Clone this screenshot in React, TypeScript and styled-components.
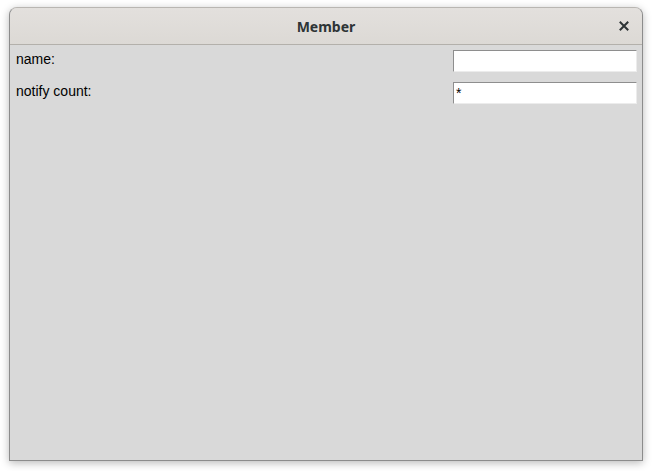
import React from "react";
import styled, { createGlobalStyle } from "styled-components";

const Global = createGlobalStyle`
  html, body { margin: 0; padding: 0; background: #ffffff; }
  body { font-family: "Liberation Sans", Arial, sans-serif; }
`;

const Page = styled.div`
  width: 652px;
  height: 471px;
  padding: 7px 0 0 9px;
  box-sizing: border-box;
`;

const Window = styled.div`
  width: 634px;
  height: 454px;
  box-sizing: border-box;
  border: 1px solid #8c8c8c;
  border-top-color: #b9b6b2;
  border-radius: 8px 8px 0 0;
  background: #d9d9d9;
  box-shadow: 0 2px 9px rgba(0, 0, 0, 0.28);
  display: flex;
  flex-direction: column;
  overflow: hidden;
`;

const TitleBar = styled.div`
  height: 36px;
  flex: none;
  background: linear-gradient(#e3e0dd, #dcd9d5);
  border-bottom: 1px solid #b3b0ab;
  display: grid;
  grid-template-columns: 40px 1fr 40px;
  align-items: center;
`;

const Title = styled.div`
  grid-column: 2;
  text-align: center;
  font-family: "Noto Sans", "Open Sans", sans-serif;
  font-weight: 700;
  font-size: 14px;
  color: #2e3436;
`;

const CloseButton = styled.div`
  grid-column: 3;
  display: flex;
  align-items: center;
  justify-content: flex-end;
  padding-right: 13px;
  color: #2e3436;
`;

const Content = styled.div`
  flex: 1;
  padding: 5px 5px 0 6px;
  display: flex;
  flex-direction: column;
  gap: 10px;
`;

const Row = styled.div`
  display: flex;
  justify-content: space-between;
  align-items: flex-start;
  height: 22px;
`;

const Label = styled.div`
  font-size: 14px;
  color: #000;
  line-height: 16px;
  padding-top: 1px;
`;

const Input = styled.div`
  width: 184px;
  height: 22px;
  box-sizing: border-box;
  background: #ffffff;
  border: 1px solid;
  border-color: #8e8e8e #ececec #ececec #8e8e8e;
  font-size: 14px;
  line-height: 21px;
  padding-left: 2px;
  color: #000;
`;

export default function App() {
  return (
    <>
      <Global />
      <Page>
        <Window>
          <TitleBar>
            <Title>Member</Title>
            <CloseButton>
              <svg width="10" height="10" viewBox="0 0 10 10">
                <path d="M1.5 1.5 L8.5 8.5 M8.5 1.5 L1.5 8.5" stroke="#2e3436" strokeWidth="2" strokeLinecap="square" />
              </svg>
            </CloseButton>
          </TitleBar>
          <Content>
            <Row>
              <Label>name:</Label>
              <Input />
            </Row>
            <Row>
              <Label>notify count:</Label>
              <Input>*</Input>
            </Row>
          </Content>
        </Window>
      </Page>
    </>
  );
}
